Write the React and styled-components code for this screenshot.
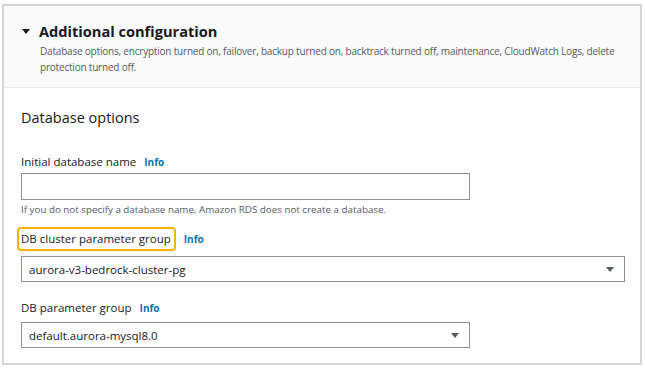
import React from 'react';
import styled, { createGlobalStyle } from 'styled-components';

const GlobalStyle = createGlobalStyle`
  html, body {
    margin: 0;
    padding: 0;
    background: #ffffff;
  }
  body {
    font-family: "Open Sans", "Noto Sans", sans-serif;
    color: #16191f;
  }
`;

const Panel = styled.section`
  box-sizing: border-box;
  margin: 4px 4px 0 2px;
  width: 640px;
  height: 361px;
  border: 2px solid #d5d5d5;
  display: flex;
  flex-direction: column;
  overflow: hidden;
`;

const Header = styled.header`
  background: #fafafa;
  border-bottom: 1px solid #eaeded;
  padding: 14px 4px 0 16px;
  height: 82px;
  box-sizing: border-box;
`;

const TitleRow = styled.div`
  display: flex;
  align-items: center;
  gap: 9px;
  height: 22px;
  padding-left: 2px;
`;

const Caret = styled.span`
  width: 0;
  height: 0;
  border-left: ${p => p.size}px solid transparent;
  border-right: ${p => p.size}px solid transparent;
  border-top: ${p => Math.round(p.size * 1.3)}px solid ${p => p.color || '#16191f'};
  flex: none;
`;

const Title = styled.h2`
  margin: 0;
  font-size: 14.6px;
  font-weight: 700;
  color: #16191f;
`;

const Description = styled.p`
  margin: 1px 0 0 20px;
  font-size: 10px;
  letter-spacing: -0.2px;
  line-height: 16px;
  color: #545b64;
`;

const Body = styled.div`
  padding: 19px 16px 0 17px;
  display: flex;
  flex-direction: column;
`;

const SectionTitle = styled.h3`
  margin: 0 0 23px;
  font-size: 14.5px;
  font-weight: 400;
  line-height: 22px;
  color: #16191f;
`;

const Field = styled.div`
  display: flex;
  flex-direction: column;
  margin-bottom: ${p => p.gap || 0}px;
`;

const LabelRow = styled.div`
  display: flex;
  align-items: center;
  gap: 8px;
  height: 20px;
  margin-bottom: ${p => p.space}px;
`;

const Label = styled.label`
  font-size: 11.5px;
  line-height: 18px;
  color: #16191f;
  ${p =>
    p.highlight &&
    `
    border: 2px solid #f5b400;
    border-radius: 4px;
    padding: 1px 3px 1px 2px;
    margin-left: -4px;
  `}
`;

const Info = styled.a`
  font-size: 10px;
  font-weight: 700;
  color: #0073bb;
  text-decoration: none;
`;

const TextInput = styled.div`
  box-sizing: border-box;
  width: ${p => p.width}px;
  height: 27px;
  border: 1px solid #8d9096;
  background: #ffffff;
`;

const Select = styled.div`
  box-sizing: border-box;
  width: ${p => p.width}px;
  height: 26px;
  border: 1px solid #8d9096;
  background: #ffffff;
  display: flex;
  align-items: center;
  justify-content: space-between;
  padding: 0 10px 0 7px;
  font-size: 11.5px;
  color: #16191f;
`;

const Hint = styled.div`
  margin-top: 3px;
  font-size: 9.8px;
  line-height: 14px;
  color: #545b64;
`;

export default function App() {
  return (
    <>
      <GlobalStyle />
      <Panel>
        <Header>
          <TitleRow>
            <Caret size={4} />
            <Title>Additional configuration</Title>
          </TitleRow>
          <Description>
            Database options, encryption turned on, failover, backup turned on, backtrack turned off,
            maintenance, CloudWatch Logs, delete protection turned off.
          </Description>
        </Header>
        <Body>
          <SectionTitle>Database options</SectionTitle>
          <Field gap={12}>
            <LabelRow space={1}>
              <Label>Initial database name</Label>
              <Info>Info</Info>
            </LabelRow>
            <TextInput width={449} />
            <Hint>If you do not specify a database name, Amazon RDS does not create a database.</Hint>
          </Field>
          <Field gap={16}>
            <LabelRow space={7}>
              <Label highlight>DB cluster parameter group</Label>
              <Info>Info</Info>
            </LabelRow>
            <Select width={604}>
              <span>aurora-v3-bedrock-cluster-pg</span>
              <Caret size={4} color="#545b64" />
            </Select>
          </Field>
          <Field>
            <LabelRow space={4}>
              <Label>DB parameter group</Label>
              <Info>Info</Info>
            </LabelRow>
            <Select width={449}>
              <span>default.aurora-mysql8.0</span>
              <Caret size={4} color="#545b64" />
            </Select>
          </Field>
        </Body>
      </Panel>
    </>
  );
}
